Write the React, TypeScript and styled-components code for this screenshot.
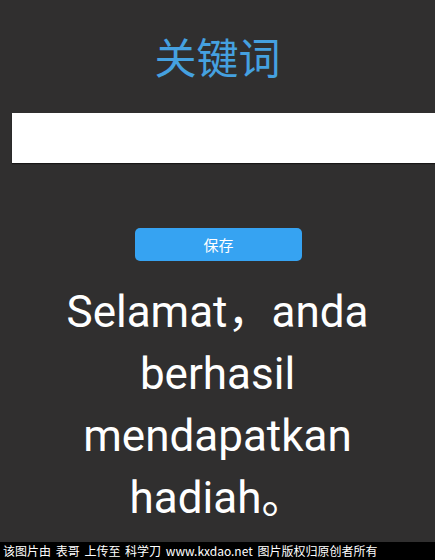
import React from "react";
import styled, { createGlobalStyle } from "styled-components";

const Global = createGlobalStyle`
  html, body {
    margin: 0;
    padding: 0;
    background: #302f2f;
  }
  #root { min-height: 560px; }
`;

const Page = styled.div`
  display: flex;
  flex-direction: column;
  min-height: 560px;
  background: #302f2f;
  font-family: Roboto, "Noto Sans CJK SC", sans-serif;
`;

const Title = styled.h1`
  margin: 31px 0 0;
  text-align: center;
  font-family: "Noto Sans CJK SC", sans-serif;
  font-weight: 400;
  font-size: 42px;
  line-height: 50px;
  color: #45a1e0;
`;

const KeywordInput = styled.input`
  display: block;
  box-sizing: border-box;
  margin: 32px 0 0 12px;
  width: calc(100% - 12px);
  height: 50px;
  border: none;
  outline: none;
  background: #ffffff;
  box-shadow: 0 1px 1px rgba(0, 0, 0, 0.5);
`;

const SaveButton = styled.button`
  display: block;
  margin: 65px 0 0 135px;
  width: 167px;
  height: 33px;
  border: none;
  border-radius: 5px;
  background: #36a3f2;
  color: #ffffff;
  font-family: "Noto Sans CJK SC", sans-serif;
  font-size: 15px;
  cursor: pointer;
`;

const Message = styled.div`
  margin-top: 20px;
  text-align: center;
  color: #ffffff;
  font-size: 44px;
  line-height: 62px;
`;

const Line = styled.div`
  white-space: nowrap;
`;

const Footer = styled.div`
  margin-top: auto;
  height: 18px;
  background: #000000;
  color: #ffffff;
  font-family: "Noto Sans CJK SC", sans-serif;
  font-size: 12px;
  line-height: 18px;
  padding-left: 3px;
  white-space: nowrap;
  overflow: hidden;
  word-spacing: 2px;
`;

export default function App() {
  return (
    <>
      <Global />
      <Page>
        <Title>关键词</Title>
        <KeywordInput type="text" />
        <SaveButton>保存</SaveButton>
        <Message>
          <Line>Selamat，anda</Line>
          <Line>berhasil</Line>
          <Line>mendapatkan</Line>
          <Line>hadiah。</Line>
        </Message>
        <Footer>该图片由 表哥 上传至 科学刀 www.kxdao.net 图片版权归原创者所有</Footer>
      </Page>
    </>
  );
}
